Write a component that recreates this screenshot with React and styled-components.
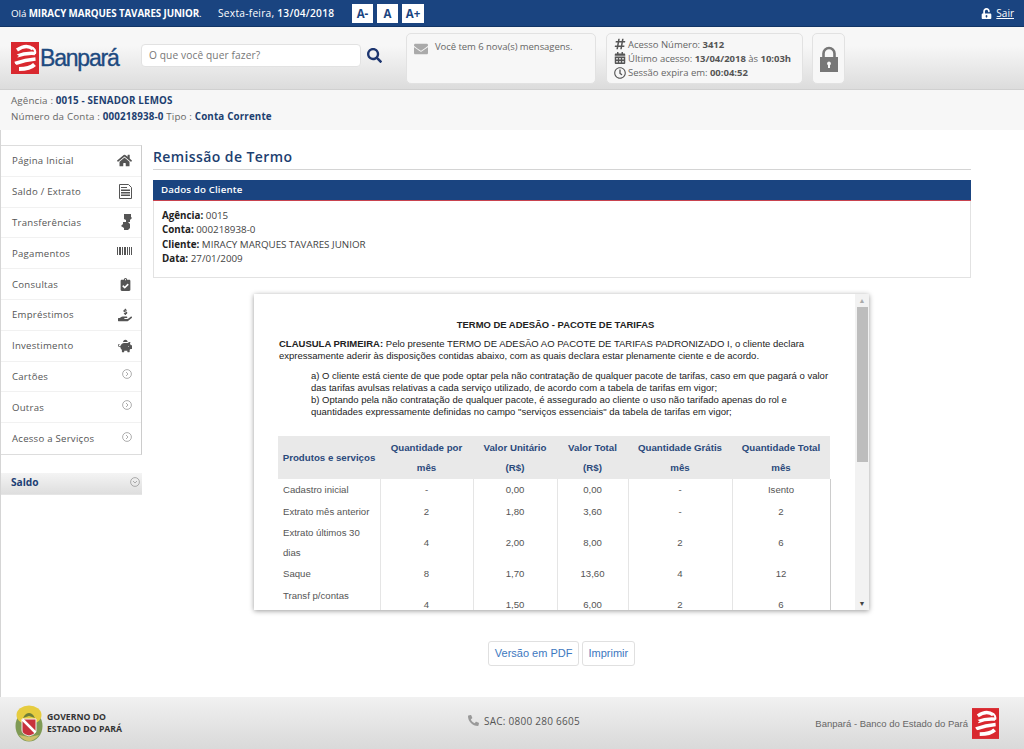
import React from "react";
import styled, { createGlobalStyle } from "styled-components";
import { FaHome, FaSearch, FaEnvelope, FaHashtag, FaCalendarAlt, FaRegClock, FaUnlockAlt, FaPiggyBank, FaClipboardCheck, FaHandHoldingUsd, FaPhone } from "react-icons/fa";

const NAVY = "#1a4480";
const UI = `"Open Sans", "Noto Sans", sans-serif`;

const Global = createGlobalStyle`
  html, body { margin: 0; padding: 0; background: #fff; }
  body { font-family: ${UI}; }
  * { box-sizing: border-box; }
`;
const Page = styled.div`display:flex;flex-direction:column;width:1024px;height:749px;overflow:hidden;background:#fff;`;

const TopBar = styled.div`height:27px;background:${NAVY};border-bottom:1px solid #123566;display:flex;align-items:center;padding:0 10px 0 11px;color:#fff;font-size:9.8px;`;
const Hello = styled.span`width:207px;white-space:nowrap;letter-spacing:-.1px;b{font-weight:700;}`;
const DateText = styled.span`width:134px;white-space:nowrap;font-size:10.2px;letter-spacing:.25px;b{font-weight:600;}`;
const FontButtons = styled.div`display:flex;gap:4px;`;
const FontBtn = styled.button`width:${p => p.$w}px;height:19px;border:0;padding:0;background:#fff;color:${NAVY};font:700 11.5px ${UI};`;
const Sair = styled.a`margin-left:auto;display:flex;align-items:center;gap:4px;color:#fff;font-size:10px;text-decoration:underline;svg{font-size:11px;}`;

const Header = styled.div`height:63px;background:linear-gradient(#f7f7f7 30%,#dcdcdc);border-bottom:1px solid #d0d0d0;display:flex;align-items:flex-start;padding-left:11px;`;
const LogoWrap = styled.div`display:flex;align-items:center;width:130px;margin-top:15px;`;
const Wordmark = styled.span`font:400 23px "Liberation Sans",sans-serif;color:#1d4a80;letter-spacing:-1.2px;margin-left:1px;-webkit-text-stroke:.35px #1d4a80;`;
const SearchInput = styled.div`width:220px;height:23px;margin-top:17px;background:#fff;border:1px solid #e2e2e2;border-radius:4px;padding:0 7px;color:#777;font-size:10.2px;line-height:21px;letter-spacing:.1px;`;
const SearchBtn = styled.div`margin:21px 0 0 6px;width:39px;color:#1d3670;font-size:15px;line-height:0;`;
const InfoBox = styled.div`width:${p => p.$w}px;height:51px;margin:6px ${p => p.$mr}px 0 0;background:#f7f7f7;border:1px solid #e2e2e2;border-radius:5px;color:#666;font-size:9.5px;`;
const MsgBox = styled(InfoBox)`display:flex;align-items:flex-start;gap:7px;padding:8px 7px;line-height:10px;letter-spacing:-.05px;white-space:nowrap;svg{font-size:14px;color:#aaa;flex:none;}`;
const AccessBox = styled(InfoBox)`padding:3px 7px;display:flex;flex-direction:column;`;
const AccessLine = styled.div`display:flex;align-items:center;height:14.7px;gap:2px;white-space:pre;letter-spacing:-.02px;svg{font-size:12px;color:#555;flex:none;}b{color:#555;font-weight:700;}`;
const LockBox = styled(InfoBox)`display:flex;align-items:center;justify-content:center;`;

const AccountInfo = styled.div`height:40px;background:#f7f7f7;padding:3px 11px;font-size:9.8px;line-height:16px;color:#666;letter-spacing:.15px;b{color:#1d3f70;font-weight:700;}`;

const Body = styled.div`flex:1;display:flex;border-left:1px solid #d5d5d5;min-height:0;`;
const Side = styled.div`width:141px;flex:none;padding-top:15px;`;
const Menu = styled.div`border:1px solid #ddd;border-left:0;border-right-color:#ccc;background:#fff;`;
const MenuItem = styled.div`height:30.8px;display:flex;align-items:center;justify-content:space-between;padding:0 9px 0 11px;border-bottom:1px solid #f1f1f1;color:#555;font-size:9.6px;letter-spacing:.25px;&:last-child{border-bottom:0;}`;
const MenuIcon = styled.span`display:flex;color:#555;margin-top:${p => p.$up ? -4 : 0}px;`;
const SaldoBar = styled.div`margin-top:18px;height:22px;background:linear-gradient(#f4f4f4,#dedede);display:flex;align-items:center;justify-content:space-between;padding:0 2px 2px 10px;color:#1d3f75;font-size:10.2px;font-weight:700;border-bottom:1px solid #e5e5e5;`;

const Main = styled.div`width:818px;margin-left:11px;display:flex;flex-direction:column;`;
const Title = styled.h1`margin:0;height:40px;padding-top:17px;border-bottom:1px solid #d4d4d4;font:600 14px/20px ${UI};color:#1d4070;letter-spacing:.4px;`;
const Panel = styled.div`margin-top:10px;height:98px;border:1px solid #e2e2e2;border-top:0;`;
const PanelHead = styled.div`height:21px;margin:0 -1px;background:${NAVY};border-bottom:1px solid #c8434f;color:#fff;font-size:9.7px;line-height:19px;padding-left:8px;letter-spacing:.15px;font-weight:600;`;
const PanelBody = styled.div`padding:8px 8px;font-size:9.8px;line-height:14.3px;color:#444;letter-spacing:0;b{color:#222;font-weight:700;}`;

const Doc = styled.div`margin:16px 0 0 101px;width:615px;height:316px;display:flex;background:#fff;box-shadow:0 1px 5px rgba(0,0,0,.4);`;
const DocScroll = styled.div`flex:1;overflow:hidden;padding:25px 24px 0 25px;font:9.5px/11.7px "Liberation Sans",sans-serif;color:#333;white-space:nowrap;`;
const DocTitle = styled.div`text-align:center;font-weight:700;color:#222;font-size:9.45px;margin-bottom:7px;line-height:12px;padding-left:1px;`;
const P = styled.p`margin:0 0 9px;font-size:9.5px;color:#222;b{font-weight:700;}`;
const Ind = styled(P)`margin:0 0 19px;padding-left:32px;`;
const Table = styled.table`border-collapse:collapse;width:552px;margin-left:-1px;table-layout:fixed;font:9.6px/19.5px "Liberation Sans",sans-serif;color:#555;white-space:normal;`;
const Th = styled.th`background:#e9e9e9;color:#2b4a7c;font-weight:700;height:43px;padding:0 3px;font-size:9.7px;width:${p => p.$w}px;`;
const Td = styled.td`text-align:center;padding:1px 5px;border-left:1px solid #e5e5e5;border-right:1px solid #e5e5e5;&:first-child{text-align:left;border-left:0;}&:last-child{border-right-color:#ccc;}`;
const Bar = styled.div`width:14px;flex:none;background:#f2f2f2;display:flex;flex-direction:column;align-items:center;font-size:7px;color:#555;`;
const Arrow = styled.div`height:13px;line-height:13px;color:${p => p.$c};`;
const Thumb = styled.div`height:155px;width:11px;background:#bdbdbd;`;
const Spacer = styled.div`flex:1;`;

const Actions = styled.div`display:flex;justify-content:center;gap:3px;margin-top:31px;padding-right:1px;`;
const Btn = styled.a`height:25px;padding:0 5.5px;border:1px solid #e0e0e0;border-radius:3px;font:11px/23px "Liberation Sans",sans-serif;color:#3d78c0;background:#fff;`;

const Footer = styled.div`height:52px;background:linear-gradient(#f1f1f1,#d9d9d9);display:flex;align-items:center;padding:0 25px 0 14px;`;
const Gov = styled.div`display:flex;align-items:center;gap:2px;width:454px;font:700 8.7px/12px "Open Sans",sans-serif;color:#333;`;
const Sac = styled.div`display:flex;align-items:center;gap:5px;font-size:10px;color:#555;letter-spacing:.25px;margin-top:-5px;svg{color:#999;font-size:11px;transform:scaleX(-1);}`;
const Credit = styled.div`margin-left:auto;display:flex;align-items:center;gap:4px;font:9.5px "Liberation Sans",sans-serif;color:#666;`;

const LogoMark = ({ w = 28, h = 32 }) => (
  <svg width={w} height={h} viewBox="0 0 28 32">
    <rect width="28" height="32" fill="#d9282f" />
    <g fill="none" stroke="#fff" strokeLinecap="butt">
      <path d="M6 8C11 4.500 17 3 22 7" strokeWidth="3.500" />
      <path d="M6 14C11 12 17 11 24 11.500" strokeWidth="3.500" />
      <path d="M4 21.500C11 19 18 17.500 24.500 17" strokeWidth="3.500" />
      <path d="M8 27C14 27 20 26 23.500 22.500" strokeWidth="4" />
      <path d="M21 5.500C24 7 24.500 10 24 12" strokeWidth="2" />
    </g>
    <path d="M3 10l5 4-5 3zM3 21l4 3-4 3z" fill="#d9282f" />
  </svg>
);

const Crest = () => (
  <svg width="31" height="37" viewBox="0 0 31 37">
    <ellipse cx="15" cy="21" rx="13.500" ry="15.500" fill="#7f9a55" />
    <ellipse cx="15" cy="10" rx="12.500" ry="9.500" fill="#e6cc3f" />
    <path d="M9 13c2-4 4-5 6-5s4 1 6 5l-6-2z" fill="#6d7f3a" />
    <path d="M5 30c3 4 7 6 10 6s7-2 10-6l-10 2z" fill="#cfc06a" />
    <path d="M8 14h14v11c0 4-4 5-7 6-3-1-7-2-7-6z" fill="#c8323c" stroke="#f4f4f4" />
    <path d="M8.500 14.500l13 13" stroke="#fff" strokeWidth="2.500" />
  </svg>
);

const BigLock = () => (
  <svg width="18" height="26" viewBox="0 0 18 26">
    <path d="M3.500 12V7.500a5.500 5.500 0 0 1 11 0V12" fill="none" stroke="#777" strokeWidth="2.600" />
    <path fillRule="evenodd" fill="#777" d="M0 11h18v15H0zM9 15.500a2 2 0 0 0-1 3.700V22h2v-2.800a2 2 0 0 0-1-3.700z" />
  </svg>
);

const CircleArrow = ({ down }) => (
  <svg width="10" height="10" viewBox="0 0 10 10" fill="none" stroke="#999" strokeWidth=".8">
    <circle cx="5" cy="5" r="4.400" />
    <path d={down ? "M3 4l2 2 2-2" : "M4 3l2 2-2 2"} />
  </svg>
);

const Transfer = () => (
  <svg width="11" height="16" viewBox="0 0 11 16" fill="#555">
    <path d="M3 0h7v3l1 1-2 2v2H5V6L3 5zM2 8h5l2 2v4l-2 2H3v-2L0 12l2-2z" />
  </svg>
);
const Sheet = () => (
  <svg width="13" height="15" viewBox="0 0 13 15">
    <path d="M.5.500h9l3 3v11H.500z" fill="#fff" stroke="#555" />
    <path d="M2 3h6v1H2zM2 5.500h9v1.500H2zM2 8h9v1.500H2zM2 10.500h9V12H2z" fill="#555" />
  </svg>
);
const Barcode = () => (
  <svg width="15" height="8" viewBox="0 0 15 8" fill="#555">
    <path d="M0 0h1v8H0zM2 0h2v8H2zM5 0h1v8H5zM7 0h2v8H7zM10 0h1v8h-1zM12 0h1v8h-1zM14 0h1v8h-1z" />
  </svg>
);

const menu = [
  ["Página Inicial", <FaHome size={15} />],
  ["Saldo / Extrato", <Sheet />],
  ["Transferências", <Transfer />],
  ["Pagamentos", <Barcode />, true],
  ["Consultas", <FaClipboardCheck size={13} />],
  ["Empréstimos", <FaHandHoldingUsd size={14} />],
  ["Investimento", <FaPiggyBank size={14} />],
  ["Cartões", <CircleArrow />, true],
  ["Outras", <CircleArrow />, true],
  ["Acesso a Serviços", <CircleArrow />, true],
];
const rows = [
  ["Cadastro inicial", "-", "0,00", "0,00", "-", "Isento"],
  ["Extrato mês anterior", "2", "1,80", "3,60", "-", "2"],
  ["Extrato últimos 30 dias", "4", "2,00", "8,00", "2", "6"],
  ["Saque", "8", "1,70", "13,60", "4", "12"],
  ["Transf p/contas correntes", "4", "1,50", "6,00", "2", "6"],
];
const heads = [["Produtos e serviços", 102], ["Quantidade por mês", 93], ["Valor Unitário (R$)", 84], ["Valor Total (R$)", 71], ["Quantidade Grátis mês", 104], ["Quantidade Total mês", 98]];

export default function App() {
  return (
    <Page>
      <Global />
      <TopBar>
        <Hello>Olá <b>MIRACY MARQUES TAVARES JUNIOR</b>.</Hello>
        <DateText>Sexta-feira, <b>13/04/2018</b></DateText>
        <FontButtons>
          <FontBtn $w={21}>A-</FontBtn>
          <FontBtn $w={21}>A</FontBtn>
          <FontBtn $w={22}>A+</FontBtn>
        </FontButtons>
        <Sair><FaUnlockAlt />Sair</Sair>
      </TopBar>
      <Header>
        <LogoWrap><LogoMark /><Wordmark>Banpará</Wordmark></LogoWrap>
        <SearchInput>O que você quer fazer?</SearchInput>
        <SearchBtn><FaSearch /></SearchBtn>
        <MsgBox $w={190} $mr={10}><FaEnvelope /><span>Você tem 6 nova(s) mensagens.</span></MsgBox>
        <AccessBox $w={197} $mr={9}>
          <AccessLine><FaHashtag /><span>Acesso Número: <b>3412</b></span></AccessLine>
          <AccessLine><FaCalendarAlt /><span>Último acesso: <b>13/04/2018</b> às <b>10:03h</b></span></AccessLine>
          <AccessLine><FaRegClock /><span>Sessão expira em: <b>00:04:52</b></span></AccessLine>
        </AccessBox>
        <LockBox $w={33} $mr={0}><BigLock /></LockBox>
      </Header>
      <AccountInfo>
        Agência : <b>0015 - SENADOR LEMOS</b><br />
        Número da Conta : <b>000218938-0</b> Tipo : <b>Conta Corrente</b>
      </AccountInfo>
      <Body>
        <Side>
          <Menu>
            {menu.map(([t, i, up]) => <MenuItem key={t}>{t}<MenuIcon $up={up}>{i}</MenuIcon></MenuItem>)}
          </Menu>
          <SaldoBar>Saldo <CircleArrow down /></SaldoBar>
        </Side>
        <Main>
          <Title>Remissão de Termo</Title>
          <Panel>
            <PanelHead>Dados do Cliente</PanelHead>
            <PanelBody>
              <b>Agência:</b> 0015<br />
              <b>Conta:</b> 000218938-0<br />
              <b>Cliente:</b> MIRACY MARQUES TAVARES JUNIOR<br />
              <b>Data:</b> 27/01/2009
            </PanelBody>
          </Panel>
          <Doc>
            <DocScroll>
              <DocTitle>TERMO DE ADESÃO - PACOTE DE TARIFAS</DocTitle>
              <P><b>CLAUSULA PRIMEIRA:</b> Pelo presente TERMO DE ADESÃO AO PACOTE DE TARIFAS PADRONIZADO I, o cliente declara<br />
                expressamente aderir às disposições contidas abaixo, com as quais declara estar plenamente ciente e de acordo.</P>
              <Ind>a) O cliente está ciente de que pode optar pela não contratação de qualquer pacote de tarifas, caso em que pagará o valor<br />
                das tarifas avulsas relativas a cada serviço utilizado, de acordo com a tabela de tarifas em vigor;<br />
                b) Optando pela não contratação de qualquer pacote, é assegurado ao cliente o uso não tarifado apenas do rol e<br />
                quantidades expressamente definidas no campo "serviços essenciais" da tabela de tarifas em vigor;</Ind>
              <Table>
                <thead><tr>{heads.map(([h, w]) => <Th key={h} $w={w}>{h}</Th>)}</tr></thead>
                <tbody>{rows.map(r => <tr key={r[0]}>{r.map((c, i) => <Td key={i}>{c}</Td>)}</tr>)}</tbody>
              </Table>
            </DocScroll>
            <Bar>
              <Arrow $c="#aaa">▲</Arrow>
              <Thumb />
              <Spacer />
              <Arrow $c="#444">▼</Arrow>
            </Bar>
          </Doc>
          <Actions>
            <Btn>Versão em PDF</Btn>
            <Btn>Imprimir</Btn>
          </Actions>
        </Main>
      </Body>
      <Footer>
        <Gov><Crest /><span>GOVERNO DO<br />ESTADO DO PARÁ</span></Gov>
        <Sac><FaPhone />SAC: 0800 280 6605</Sac>
        <Credit>Banpará - Banco do Estado do Pará <LogoMark w={27} h={31} /></Credit>
      </Footer>
    </Page>
  );
}
